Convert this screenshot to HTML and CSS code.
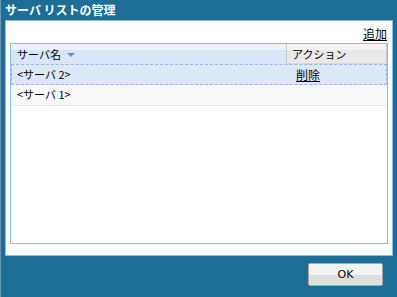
FILE: index.html
```html
<!DOCTYPE html>
<html lang="ja">
<head>
    <meta charset="UTF-8">
    <title>サーバ リストの管理</title>
    <link rel="stylesheet" href="styles.css">
</head>
<body>

    <div class="dialog">
        <div class="title">サーバ リストの管理</div>

        <div class="panel">
            <div class="toolbar">
                <a class="link" href="#">追加</a>
            </div>

            <div class="grid">
                <div class="grid-head">
                    <div class="head-cell name-col">
                        サーバ名
                        <span class="sort-arrow"></span>
                    </div>
                    <div class="head-cell action-col">アクション</div>
                </div>

                <div class="grid-row selected">
                    <div class="cell name-col">&lt;サーバ 2&gt;</div>
                    <div class="cell action-col"><a class="link" href="#">削除</a></div>
                </div>
                <div class="grid-row">
                    <div class="cell name-col">&lt;サーバ 1&gt;</div>
                    <div class="cell action-col"></div>
                </div>
            </div>
        </div>

        <div class="footer">
            <button class="ok-button">OK</button>
        </div>
    </div>

</body>
</html>
```

FILE: styles.css
```css
/* Page Setup */
html, body {
    margin: 0;
    padding: 0;
    background-color: #1d6e96;
    font-family: "Noto Sans CJK JP", "DejaVu Sans", sans-serif;
    font-size: 11px;
    color: #000;
}

.dialog {
    width: 396px;
    height: 297px;
    border-left: 1px solid #6e98b0;
    box-sizing: border-box;
    display: flex;
    flex-direction: column;
}

/* Title bar */
.title {
    height: 20px;
    line-height: 20px;
    padding-left: 4px;
    color: #fff;
    font-weight: bold;
    font-size: 12px;
}

/* White panel */
.panel {
    margin: 0 3px 0 4px;
    height: 236px;
    box-sizing: border-box;
    background: #fff;
    border: 1px solid #8fb9e8;
    padding: 0 4px 11px 4px;
    display: flex;
    flex-direction: column;
}

.toolbar {
    height: 22px;
    display: flex;
    justify-content: flex-end;
    align-items: center;
    padding-right: 1px;
}

.toolbar .link {
    font-size: 12px;
    margin-top: 2px;
}

.link {
    color: #000;
    text-decoration: underline;
}

/* Grid */
.grid {
    flex: 1;
    border: 1px solid #8fb9e8;
    background: #fff;
}

.grid-head {
    display: flex;
    height: 20px;
}

.head-cell {
    line-height: 20px;
    box-sizing: border-box;
}

.name-col {
    width: 275px;
    padding-left: 6px;
    box-sizing: border-box;
}

.action-col {
    flex: 1;
    box-sizing: border-box;
}

.grid-head .name-col {
    background: linear-gradient(#eaf2fc 0, #eaf2fc 6px, #d8e6f8 6px);
    display: flex;
    align-items: center;
}

.grid-head .action-col {
    background: linear-gradient(#f5f5f5 0, #f5f5f5 6px, #e9e9e9 6px);
    border-left: 1px solid #c8c8c8;
    border-right: 1px solid #c8c8c8;
    border-bottom: 1px solid #d8d8d8;
    padding-left: 5px;
}

.sort-arrow {
    width: 0;
    height: 0;
    border-left: 4px solid transparent;
    border-right: 4px solid transparent;
    border-top: 4px solid #6a8fc8;
    margin-left: 6px;
    margin-top: 1px;
}

.grid-row {
    display: flex;
    height: 21px;
    line-height: 19px;
    background: #f9f9f9;
    border-bottom: 1px solid #e6e6e6;
    box-sizing: border-box;
}

.grid-row.selected {
    background: #dde8f7;
    border: 1px dashed #95b6e8;
    height: 21px;
}

.grid-row.selected .name-col {
    padding-left: 5px;
}

.grid-row .action-col {
    padding-left: 9px;
}

.grid-row .action-col .link {
    font-size: 12px;
}

/* Footer */
.footer {
    flex: 1;
    display: flex;
    justify-content: flex-end;
    align-items: flex-start;
    padding: 7px 13px 0 0;
}

.ok-button {
    width: 75px;
    height: 23px;
    padding: 0;
    font-family: "DejaVu Sans", sans-serif;
    font-size: 11px;
    color: #000;
    border: 1px solid #a8a8a8;
    border-radius: 2px;
    background: linear-gradient(#f3f3f3 0, #f3f3f3 11px, #dedede 11px);
    cursor: pointer;
}
```
